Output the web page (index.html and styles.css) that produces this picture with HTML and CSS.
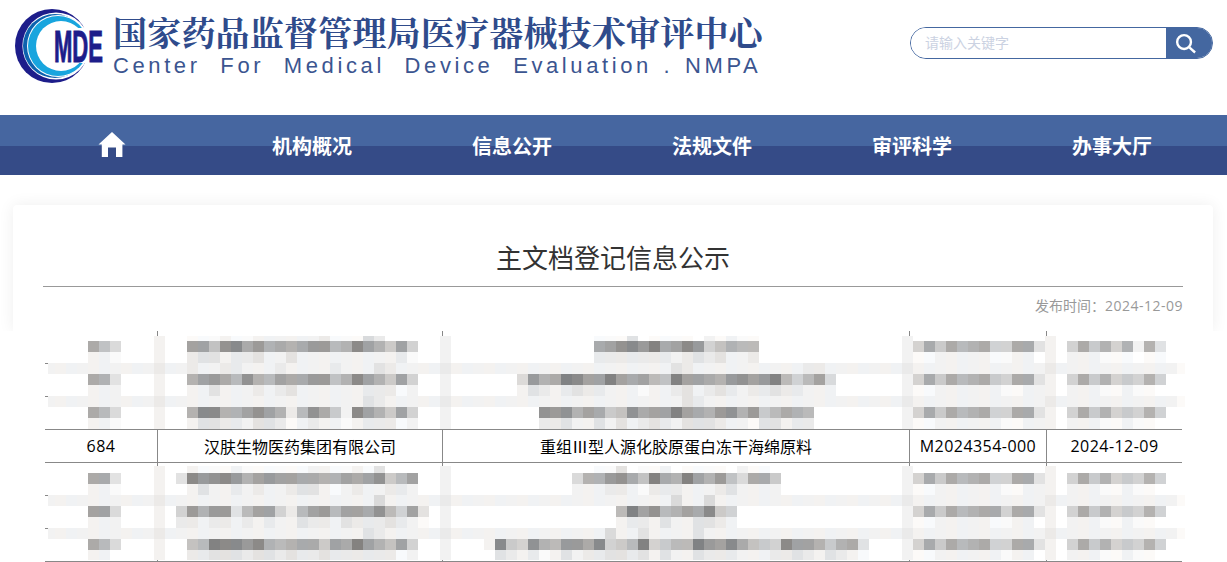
FILE: index.html
```html
<!DOCTYPE html>
<html lang="zh-CN">
<head>
<meta charset="utf-8">
<title>主文档登记信息公示</title>
<link rel="stylesheet" href="styles.css">
</head>
<body>
<header class="site-header">
  <svg class="logo" viewBox="0 0 90 76" aria-label="MDE">
    <circle class="logo-navy" cx="37" cy="37" r="37"/>
    <circle class="logo-gap" cx="41" cy="37" r="33.6"/>
    <circle class="logo-blue" cx="40" cy="37" r="32"/>
    <circle class="logo-gap" cx="43" cy="37" r="31"/>
    <circle class="logo-cyan" cx="43" cy="37" r="30"/>
    <circle class="logo-gap" cx="46" cy="37" r="25"/>
    <rect class="logo-gap" x="38" y="19" width="50" height="35"/>
    <text class="logo-text" x="39" y="53" textLength="49" lengthAdjust="spacingAndGlyphs">MDE</text>
  </svg>
  <div class="brand">
    <div class="brand-cn">国家药品监督管理局医疗器械技术审评中心</div>
    <div class="brand-en">Center For Medical Device Evaluation<span class="brand-tail"> . NMPA</span></div>
  </div>
  <form class="search">
    <input class="search-input" type="text" placeholder="请输入关键字">
    <button class="search-btn" type="button" aria-label="搜索">
      <svg class="search-icon" viewBox="0 0 24 24"><circle cx="10.5" cy="10.5" r="7.2"/><path d="M16 16l6 5.4"/></svg>
    </button>
  </form>
</header>
<nav class="main-nav">
  <a class="nav-item" href="#" aria-label="首页">
    <svg class="home-icon" viewBox="0 0 28 25"><path d="M14 0L27.5 12.4H24.4V25H18V15.5H10V25H3.8V12.4H.5Z"/></svg>
  </a>
  <a class="nav-item" href="#">机构概况</a>
  <a class="nav-item" href="#">信息公开</a>
  <a class="nav-item" href="#">法规文件</a>
  <a class="nav-item" href="#">审评科学</a>
  <a class="nav-item" href="#">办事大厅</a>
</nav>
<section class="card">
  <h1 class="card-title">主文档登记信息公示</h1>
  <p class="card-date">发布时间：<span class="latin">2024-12-09</span></p>
</section>
<section class="table-wrap">
  <table class="notice-table">
    <colgroup><col class="col-no"><col class="col-company"><col class="col-product"><col class="col-code"><col class="col-date"></colgroup>
    <tbody>
      <tr><td></td><td></td><td></td><td></td><td></td></tr>
      <tr><td></td><td></td><td></td><td></td><td></td></tr>
      <tr><td></td><td></td><td></td><td></td><td></td></tr>
      <tr>
        <td class="latin-cell">684</td>
        <td>汉肤生物医药集团有限公司</td>
        <td>重组Ⅲ型人源化胶原蛋白冻干海绵原料</td>
        <td class="latin-cell">M2024354-000</td>
        <td class="latin-cell">2024-12-09</td>
      </tr>
      <tr><td></td><td></td><td></td><td></td><td></td></tr>
      <tr><td></td><td></td><td></td><td></td><td></td></tr>
      <tr><td></td><td></td><td></td><td></td><td></td></tr>
    </tbody>
  </table>
  <canvas class="mosaic mosaic-top" id="mosaicTop" width="1137" height="93"></canvas>
  <canvas class="mosaic mosaic-bottom" id="mosaicBottom" width="1137" height="94"></canvas>
</section>
<script src="mosaic.js"></script>
</body>
</html>
```
FILE: styles.css
```css
* { box-sizing: border-box; }
html, body { margin: 0; padding: 0; background: #fff; }
body { font-family: "Noto Sans CJK SC", "Liberation Sans", sans-serif; width: 1227px; height: 562px; overflow: hidden; }

.site-header { display: flex; align-items: flex-start; height: 115px; padding: 9px 14px 0 15px; }
.logo { width: 90px; height: 76px; flex: none; }
.logo-navy { fill: #1d1d8a; }
.logo-gap { fill: #fff; }
.logo-blue { fill: #0d62ae; }
.logo-cyan { fill: #18a5de; }
.logo-text { font-family: "Liberation Sans", sans-serif; font-weight: 700; font-size: 44px; fill: #1d1d8a; stroke: #1d1d8a; stroke-width: 1; }

.brand { margin-left: 8px; color: #2f4b8b; }
.brand-cn { font-family: "Noto Serif CJK SC", "Noto Sans CJK SC", sans-serif; font-weight: 700; font-size: 34px; line-height: 46px; letter-spacing: .2px; white-space: nowrap; }
.brand-en { font-family: "Liberation Sans", sans-serif; font-size: 22px; line-height: 22px; letter-spacing: 3.6px; word-spacing: 10px; white-space: nowrap; color: #3b5590; }
.brand-tail { word-spacing: 2px; }

.search { display: flex; width: 303px; height: 32px; margin: 18px 0 0 auto; border: 1px solid #4467a0; border-radius: 16px; overflow: hidden; }
.search-input { flex: 1; min-width: 0; padding: 0 0 2px 14px; border: 0; outline: 0; background: #fff; font: 14px "Noto Sans CJK SC", sans-serif; }
.search-input::placeholder { color: #cbd2e2; }
.search-btn { display: flex; align-items: center; justify-content: center; width: 46px; padding: 0 7px 0 0; border: 0; background: #4467a0; }
.search-icon { width: 23px; height: 23px; flex: none; fill: none; stroke: #fff; stroke-width: 2.5; }

.main-nav { display: flex; height: 60px; padding-left: 12px; background: linear-gradient(#4666a0 0 31px, #354b87 31px); }
.nav-item { display: flex; align-items: center; justify-content: center; width: 200px; color: #fff; font-size: 20px; font-weight: 700; text-decoration: none; }
.home-icon { width: 28px; height: 25px; fill: #fff; margin-top: -1px; }

.card { height: 126px; margin: 30px 14px 0 13px; padding: 33px 30px 0; background: #fff; border-radius: 4px 4px 0 0; box-shadow: 0 0 16px rgba(0, 0, 0, .07); }
.card-title { margin: 0; padding-bottom: 10px; border-bottom: 1px solid #999; color: #333; font-size: 26px; font-weight: 400; line-height: 38px; text-align: center; }
.card-date { margin: 8px 0 0; color: #999; font-size: 14px; line-height: 20px; text-align: right; }
.latin { font-family: "Open Sans", sans-serif; letter-spacing: .5px; }

.table-wrap { position: relative; height: 231px; padding-left: 45px; background: #fff; }
.notice-table { width: 1137px; table-layout: fixed; border-collapse: separate; border-spacing: 0; color: #000; font-size: 16px; }
.notice-table td { height: 33px; padding: 0; border-right: 1px solid #888; border-bottom: 1px solid #888; text-align: center; line-height: 32px; white-space: nowrap; }
.notice-table td:last-child { border-right: 0; }
.col-no { width: 113px; }
.col-company { width: 285px; }
.col-product { width: 467px; }
.col-code { width: 137px; }
.col-date { width: 135px; }
.latin-cell { font-family: "Open Sans", sans-serif; letter-spacing: .45px; }

.mosaic { position: absolute; left: 48px; }
.mosaic-top { top: 5px; }
.mosaic-bottom { top: 135px; }
```
FILE: mosaic.js
```js
var BASE = 0x82, STEP = 8;
var VERTICALS = [14, 40, 82, 95];

function cellColor(ch, col, row) {
  var v = BASE + parseInt(ch, 16) * STEP;
  var t = (col * 7 + row * 3) % 3 - 1;
  return "rgb(" + (v + t * 2) + "," + v + "," + (v - t * 2) + ")";
}

function paint(id, originY, firstRow, lastRow, bands, data) {
  var ctx = document.getElementById(id).getContext("2d");
  function cell(col, row, ch) {
    if (ch === ".") return;
    ctx.fillStyle = cellColor(ch, col, row);
    ctx.fillRect(col * 11 - 48, row * 11 - originY, 11, 11);
  }
  for (var r = firstRow; r <= lastRow; r++) {
    if (bands.indexOf(r) >= 0) {
      for (var c = 4; c <= 106; c++) cell(c, r, "e");
      cell(107, r, "f");
    }
    VERTICALS.forEach(function (c) { cell(c, r, bands.indexOf(r) >= 0 ? "d" : "e"); });
    (data[r] || []).forEach(function (seg) {
      seg[1].split("").forEach(function (ch, i) { cell(seg[0] + i, r, ch); });
    });
  }
}

paint("mosaicTop", 336, 30, 38, [33, 36], {
  30: [[17, "fffeffeeeeeedfffbd"], [54, "fffc.ffff.efeff"]],
  31: [[8, "58b"], [17, "44821536565337614694a"], [54, "5421305413a8677"], [83, "a595765aa55c"], [97, "a596a6e6c"]],
  32: [[8, "eef"], [17, "dcceddceeceeeeeeeeedf"], [54, "dddddddedcdceed"], [83, "ffeeeeeffee."], [97, "eeefff.ff"]],
  33: [[17, "deeddeeedeeeedeeecdee"], [61, "cd"], [73, "dd"]],
  34: [[8, "56c"], [17, "64357267455338614694a"], [47, "b365014404547804456324307a74b"], [83, "a5957659a55c"], [97, "a596a9a6a"]],
  35: [[8, "eee"], [17, "eeceeededceeeeeedddfe"], [47, "ecdedcddeeefeedcedcdeddcddeee"], [83, "ffeeeeeeffee"], [97, "eeeffeff."]],
  36: [[33, "cd"], [62, "cd"]],
  37: [[8, "57b"], [17, "611664246d7259e14694a"], [49, "2326459825440456326397567"], [83, "a595765aa55c"], [97, "a596a9a6a"]],
  38: [[8, "eef"], [17, "eccddeccdfedeefedddfe"], [49, "ddceececedcdecccdeefccedd"], [83, "ffeeeeeeffee"], [97, "eeeffeff."]]
});

paint("mosaicBottom", 466, 42, 50, [45, 48], {
  42: [[17, "efffeffffffeeffefc"], [54, "ffc.ffe.ffff.eff"]],
  43: [[8, "55c"], [16, "c132136434455664542974"], [52, "b66325805604638b559"], [83, "a595765aa55c"], [97, "a596a9a6a"]],
  44: [[8, "eef"], [17, "eceededeedccefedeedde"], [52, "eeeddefdddeeedceeee"], [83, "ffeeeeeeffee"], [97, "eeeffeff."]],
  45: [[34, "b"], [61, "b"], [64, "b"]],
  46: [[8, "44b"], [16, "a3633c744ad743744527a4c"], [56, "7042764519a"], [83, "a5957655a55c"], [97, "a596a9a6a"]],
  47: [[8, "eee"], [16, "ddeddededeecddecdddcdef"], [56, "eddeceeccde"], [83, "ffeeeeeffee."], [97, "eeeffeff."]],
  48: [[33, "cd"], [55, "b"], [58, "c"], [63, "c"]],
  49: [[8, "57b"], [17, "87011316765594504684a"], [44, "e19a2673351a970a9770341589a1446965c"], [83, "a595765aa55c"], [97, "a596a9a6a"]],
  50: [[8, "ee."], [17, "ddcccdccdcddcddddddfe"], [45, "cdedfeceddccdceceecdddeeeddcdecdef"], [83, "ffeeeeeefee."], [97, "eeeffeff."]]
});
```
